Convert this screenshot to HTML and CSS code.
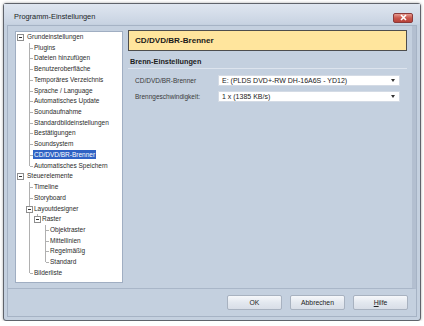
FILE: index.html
```html
<!DOCTYPE html>
<html lang="de">
<head>
    <meta charset="UTF-8">
    <title>Programm-Einstellungen</title>
    <link rel="stylesheet" href="styles.css">
</head>
<body>
    <div class="window">
        <div class="titlebar">
            <span class="title">Programm-Einstellungen</span>
            <button class="close-btn">
                <svg width="9" height="7" viewBox="0 0 9 7"><path d="M2 1 L7 6 M7 1 L2 6" stroke="#fff" stroke-width="1.6"/></svg>
            </button>
        </div>
        <div class="client">
            <div class="main">
                <div class="tree">
                    <ul class="root">
                        <li class="parent">
                            <span class="label"><span class="box"></span>Grundeinstellungen</span>
                            <ul>
                                <li><span class="label">Plugins</span></li>
                                <li><span class="label">Dateien hinzufügen</span></li>
                                <li><span class="label">Benutzeroberfläche</span></li>
                                <li><span class="label">Temporäres Verzeichnis</span></li>
                                <li><span class="label">Sprache / Language</span></li>
                                <li><span class="label">Automatisches Update</span></li>
                                <li><span class="label">Soundaufnahme</span></li>
                                <li><span class="label">Standardbildeinstellungen</span></li>
                                <li><span class="label">Bestätigungen</span></li>
                                <li><span class="label">Soundsystem</span></li>
                                <li><span class="label"><span class="selected">CD/DVD/BR-Brenner</span></span></li>
                                <li><span class="label">Automatisches Speichern</span></li>
                            </ul>
                        </li>
                        <li class="parent">
                            <span class="label"><span class="box"></span>Steuerelemente</span>
                            <ul>
                                <li><span class="label">Timeline</span></li>
                                <li><span class="label">Storyboard</span></li>
                                <li class="parent">
                                    <span class="label"><span class="box"></span>Layoutdesigner</span>
                                    <ul>
                                        <li class="parent">
                                            <span class="label"><span class="box"></span>Raster</span>
                                            <ul>
                                                <li><span class="label">Objektraster</span></li>
                                                <li><span class="label">Mittellinien</span></li>
                                                <li><span class="label">Regelmäßig</span></li>
                                                <li><span class="label">Standard</span></li>
                                            </ul>
                                        </li>
                                    </ul>
                                </li>
                                <li><span class="label">Bilderliste</span></li>
                            </ul>
                        </li>
                    </ul>
                </div>
                <div class="panel">
                    <div class="page-header">CD/DVD/BR-Brenner</div>
                    <div class="section-title">Brenn-Einstellungen</div>
                    <div class="field">
                        <label>CD/DVD/BR-Brenner</label>
                        <div class="combo">E: (PLDS DVD+-RW DH-16A6S - YD12)<span class="arrow"></span></div>
                    </div>
                    <div class="field">
                        <label>Brenngeschwindigkeit:</label>
                        <div class="combo">1 x (1385 KB/s)<span class="arrow"></span></div>
                    </div>
                </div>
            </div>
            <div class="footer">
                <button class="btn">OK</button>
                <button class="btn">Abbrechen</button>
                <button class="btn"><u>H</u>ilfe</button>
            </div>
        </div>
    </div>
</body>
</html>
```

FILE: styles.css
```css
body {
    margin: 0;
    background-color: #fff;
    font-family: 'Liberation Sans', Arial, sans-serif;
    font-size: 6.5px;
    color: #2a2a2a;
}
.window {
    position: relative;
    margin: 3px 0 0 3px;
    width: 416px;
    height: 316px;
    border: 1px solid #5f636b;
    border-radius: 3px;
    background-color: #c4d0df;
    box-shadow: 0 0 3px rgba(0, 0, 0, 0.35);
    display: flex;
    flex-direction: column;
}
.titlebar {
    height: 20px;
    display: flex;
    align-items: center;
    justify-content: space-between;
    padding: 0 7px 0 10px;
    background: linear-gradient(#dfe6f0, #c8d3e2);
}
.title {
    font-size: 7.4px;
    color: #1b1f27;
    padding-top: 4px;
}
.close-btn {
    width: 20px;
    height: 10px;
    margin-top: 7px;
    padding: 0;
    border: 1px solid #8b3a3a;
    border-radius: 2px;
    background: linear-gradient(#e69a8f, #c9564c 50%, #b7423a);
    display: flex;
    align-items: center;
    justify-content: center;
}
.client {
    flex: 1;
    margin: 1px 3px 3px 3px;
    border: 1px solid #a6b3c5;
    display: flex;
    flex-direction: column;
}
.main {
    flex: 1;
    display: flex;
    gap: 5px;
    padding: 4px 2px 5px 7px;
    border-bottom: 1px solid #a9b6c8;
    border-right: 4px solid #b3bfd0;
}

/* Baumansicht */
.tree {
    width: 106px;
    margin-top: 1px;
    background-color: #fff;
    border: 1px solid #a0aec2;
}
.tree ul {
    list-style: none;
    margin: 0;
    padding: 0 0 0 8px;
}
.tree ul.root {
    padding: 0;
}
.tree .root > li > ul {
    padding-left: 13px;
}
.tree li {
    position: relative;
}
.tree .label {
    position: relative;
    display: block;
    height: 10.73px;
    line-height: 10.73px;
    padding-left: 5px;
    white-space: nowrap;
    color: #2b2b2b;
}
.tree .root > li > .label {
    padding-left: 11px;
}
/* Linien */
.tree ul ul > li::before {
    content: '';
    position: absolute;
    left: 0;
    top: 0;
    bottom: 0;
    border-left: 1px solid #b0b0b0;
}
.tree ul ul > li:last-child::before {
    bottom: auto;
    height: 5px;
}
.tree ul ul > li > .label::before {
    content: '';
    position: absolute;
    left: 1px;
    top: 5px;
    width: 3px;
    border-top: 1px solid #b0b0b0;
}
.box {
    position: absolute;
    z-index: 1;
    left: -3px;
    top: 2px;
    width: 5px;
    height: 5px;
    border: 1px solid #8e8e8e;
    background-color: #fff;
}
.box::after {
    content: '';
    position: absolute;
    left: 1px;
    top: 2px;
    width: 3px;
    border-top: 1px solid #333;
}
.tree .root > li > .label .box {
    left: 1px;
}
.selected {
    background-color: #2f62c4;
    color: #fff;
    padding: 1px 1px;
    margin-left: -1px;
}

/* rechte Seite */
.panel {
    flex: 1;
    padding-right: 3px;
}
.page-header {
    height: 19px;
    line-height: 19px;
    background-color: #ffe59d;
    border: 1px solid #4d4d4d;
    padding-left: 6px;
    font-size: 8.1px;
    font-weight: bold;
    color: #1a1a1a;
}
.section-title {
    margin-top: 6px;
    height: 9px;
    line-height: 9px;
    padding: 0 0 2px 2px;
    font-weight: bold;
    font-size: 7.3px;
    color: #1c1c1c;
    border-bottom: 1px solid #dde4ee;
}
.field {
    display: flex;
    align-items: center;
    margin-top: 6px;
    padding-left: 7px;
}
.field + .field {
    margin-top: 5px;
}
.field label {
    width: 83px;
    color: #3a3a3a;
}
.combo {
    position: relative;
    width: 177px;
    height: 9px;
    line-height: 9px;
    background-color: #fff;
    border: 1px solid #d4dbe5;
    padding-left: 3px;
    font-size: 7px;
    color: #222;
}
.arrow {
    position: absolute;
    right: 4px;
    top: 3px;
    border-left: 2px solid transparent;
    border-right: 2px solid transparent;
    border-top: 3px solid #333;
}

/* Schaltflächen */
.footer {
    height: 27px;
    display: flex;
    justify-content: flex-end;
    align-items: center;
    gap: 8px;
    padding-right: 8px;
}
.btn {
    width: 55px;
    height: 15px;
    padding: 0;
    border: 1px solid #a8b2c0;
    border-radius: 2px;
    background: linear-gradient(#f6f8fb, #e3e8ef 50%, #d8dee7);
    font-family: 'Liberation Sans', sans-serif;
    font-size: 6.8px;
    color: #222;
}
```
